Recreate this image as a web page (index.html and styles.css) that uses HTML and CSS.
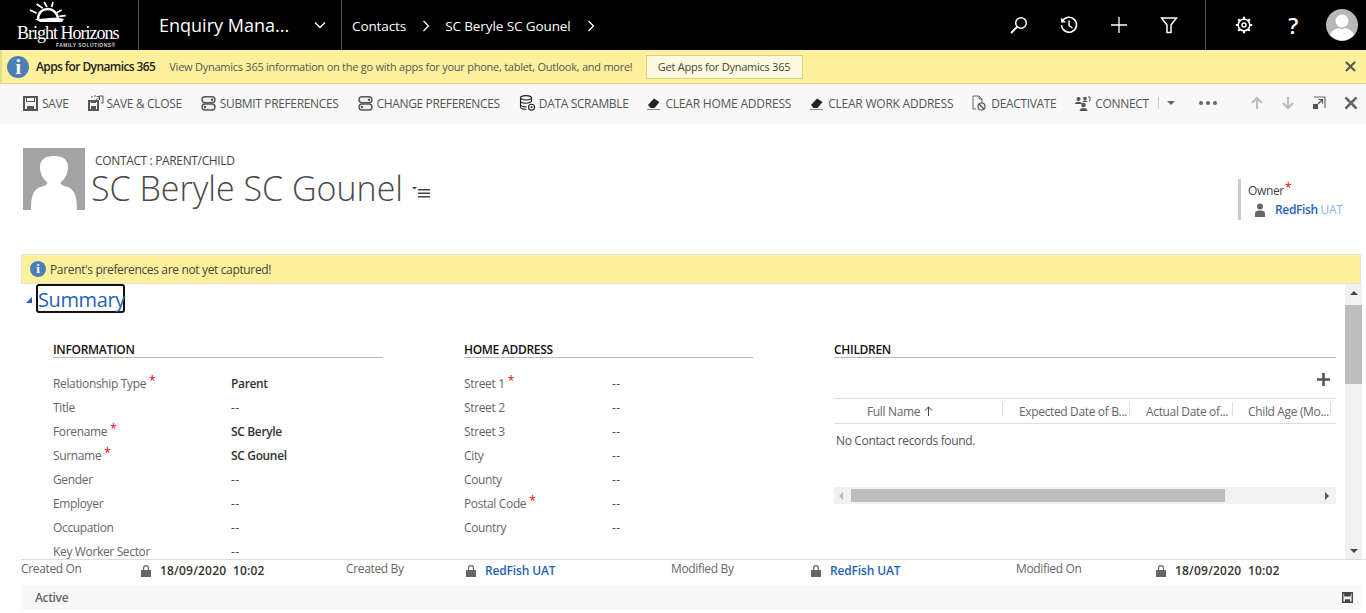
FILE: index.html
```html
<!DOCTYPE html>
<html lang="en">
<head>
    <meta charset="UTF-8">
    <meta name="viewport" content="width=device-width, initial-scale=1.0">
    <title>SC Beryle SC Gounel</title>
    <link rel="stylesheet" href="styles.css">
</head>
<body>
    <header class="topbar">
        <div class="logo">
            <svg class="logo-sun" width="44" height="23" viewBox="0 0 44 23">
                <path d="M10 19C10 11 15 8 20 8c5 0 9 4 10 9" fill="none" stroke="#fff" stroke-width="2.500"/>
                <path d="M7 18c8 1 15-3 29 0l-2 3H12z" fill="#fff"/>
                <path d="M8.700 3l6 4.300M2 9l6.700 3.300M25 1l-1.300 5M16 1l3 5M33.700 9l-5 2.700M37.700 14.700l-6.400.6" stroke="#fff" stroke-width="1.800"/>
            </svg>
            <div class="logo-name">Bright Horizons</div>
            <div class="logo-sub">FAMILY SOLUTIONS®</div>
        </div>
        <div class="app-name">
            <span>Enquiry Mana...</span>
            <svg width="12" height="8" viewBox="0 0 12 8"><path d="M1 1.500l5 5 5-5" fill="none" stroke="#fff" stroke-width="1.400"/></svg>
        </div>
        <nav class="crumbs">
            <span>Contacts</span>
            <svg class="crumb-arrow" width="8" height="12" viewBox="0 0 8 12"><path d="M1.500 1l5 5-5 5" fill="none" stroke="#fff" stroke-width="1.300"/></svg>
            <span>SC Beryle SC Gounel</span>
            <svg class="crumb-arrow" width="8" height="12" viewBox="0 0 8 12"><path d="M1.500 1l5 5-5 5" fill="none" stroke="#fff" stroke-width="1.300"/></svg>
        </nav>
        <div class="top-icons">
            <svg width="18" height="18" viewBox="0 0 18 18"><circle cx="11" cy="7" r="5.300" fill="none" stroke="#fff" stroke-width="1.500"/><path d="M7 11l-6 6" stroke="#fff" stroke-width="1.800"/></svg>
            <svg width="18" height="18" viewBox="0 0 18 18"><path d="M2.500 5A7.500 7.500 0 1 1 1.500 9" fill="none" stroke="#fff" stroke-width="1.600"/><path d="M1 1.500v5h5z" fill="#fff"/><path d="M9 4.500V9.500l3.500 2.500" fill="none" stroke="#fff" stroke-width="1.500"/></svg>
            <svg width="18" height="18" viewBox="0 0 18 18"><path d="M9 1v16M1 9h16" stroke="#fff" stroke-width="1.300"/></svg>
            <svg width="18" height="18" viewBox="0 0 18 18"><path d="M1.500 2h15l-5.500 7v7.500H7V9z" fill="none" stroke="#fff" stroke-width="1.500"/></svg>
        </div>
        <div class="top-icons top-icons-right">
            <svg width="18" height="18" viewBox="0 0 18 18"><circle cx="9" cy="9" r="2" fill="none" stroke="#fff" stroke-width="1.500"/><circle cx="9" cy="9" r="5.800" fill="none" stroke="#fff" stroke-width="1.500"/><path d="M9 .8v2.400M9 14.800v2.400M.8 9h2.400M14.800 9h2.400M3.200 3.200l1.700 1.700M13.100 13.100l1.700 1.700M3.200 14.800l1.700-1.700M13.100 4.900l1.700-1.700" stroke="#fff" stroke-width="2.200"/></svg>
            <span class="help">?</span>
            <svg class="avatar" width="32" height="32" viewBox="0 0 32 32"><circle cx="16" cy="16" r="16" fill="#b8b8b8"/><circle cx="16" cy="12" r="6.500" fill="#fff"/><path d="M4 26c2-6 7-6 9-7 2 1.500 4 1.500 6 0 2 1 7 1 9 7a16 16 0 0 1-24 0z" fill="#fff"/></svg>
        </div>
    </header>

    <div class="notify-bar">
        <span class="info-icon info-icon-big">i</span>
        <b class="notify-title">Apps for Dynamics 365</b>
        <span class="notify-text">View Dynamics 365 information on the go with apps for your phone, tablet, Outlook, and more!</span>
        <button class="notify-btn">Get Apps for Dynamics 365</button>
        <svg class="notify-close" width="11" height="11" viewBox="0 0 12 12"><path d="M1 1l10 10M11 1L1 11" stroke="#555" stroke-width="2.200"/></svg>
    </div>

    <div class="command-bar">
        <div class="cmd">
            <svg width="15" height="15" viewBox="0 0 15 15"><path d="M1 1h13v13H1z" fill="none" stroke="#555" stroke-width="2"/><path d="M3 1h9v5H3zM4 10h7v4H4z" fill="#555"/><path d="M4 2h7v3H4z" fill="#f8f8f8"/></svg>
            <span>SAVE</span>
        </div>
        <div class="cmd cmd-tight">
            <svg width="16" height="16" viewBox="0 0 16 16"><path d="M1 6h9v9H1z" fill="none" stroke="#555" stroke-width="2"/><path d="M3 11h5v4H3zM3 5h5v3H3z" fill="#555"/><path d="M4 3V1M6 1h2M11 1h4v7h-2" fill="none" stroke="#555"/><path d="M7 6l4-3.500M8.500 1.500H11.500V5" fill="none" stroke="#555"/></svg>
            <span>SAVE &amp; CLOSE</span>
        </div>
        <div class="cmd">
            <svg width="15" height="15" viewBox="0 0 15 15"><rect x="1" y=".8" width="13" height="6" rx="3" fill="#eee" stroke="#555" stroke-width="1.400"/><rect x="1" y="8" width="13" height="6" rx="3" fill="#eee" stroke="#555" stroke-width="1.400"/><circle cx="11" cy="3.800" r="1.200" fill="#555"/><circle cx="4" cy="11" r="1.200" fill="#555"/></svg>
            <span>SUBMIT PREFERENCES</span>
        </div>
        <div class="cmd">
            <svg width="15" height="15" viewBox="0 0 15 15"><rect x="1" y=".8" width="13" height="6" rx="3" fill="#eee" stroke="#555" stroke-width="1.400"/><rect x="1" y="8" width="13" height="6" rx="3" fill="#eee" stroke="#555" stroke-width="1.400"/><circle cx="11" cy="3.800" r="1.200" fill="#555"/><circle cx="4" cy="11" r="1.200" fill="#555"/></svg>
            <span>CHANGE PREFERENCES</span>
        </div>
        <div class="cmd">
            <svg width="16" height="16" viewBox="0 0 16 16"><ellipse cx="7" cy="2.800" rx="5.500" ry="2.200" fill="none" stroke="#222" stroke-width="1.100"/><path d="M1.500 3v9c0 1.500 2.500 2.300 6 2.200M12.500 3v4M1.500 6.500c1 2 8 2.500 11 0M1.500 10c1 1.500 4 2 6 1.800" fill="none" stroke="#222" stroke-width="1.100"/><circle cx="12.500" cy="12.300" r="3" fill="none" stroke="#222" stroke-width="1.100"/><circle cx="12.500" cy="12.300" r="1" fill="#222"/></svg>
            <span>DATA SCRAMBLE</span>
        </div>
        <div class="cmd cmd-wide">
            <svg width="14" height="13" viewBox="0 0 14 13"><path d="M1 8l6-6.500 5.500 3.500-5 6H3.500z" fill="#222"/><path d="M0 12h13v1H0z" fill="#888"/></svg>
            <span>CLEAR HOME ADDRESS</span>
        </div>
        <div class="cmd cmd-wide">
            <svg width="14" height="13" viewBox="0 0 14 13"><path d="M1 8l6-6.500 5.500 3.500-5 6H3.500z" fill="#222"/><path d="M0 12h13v1H0z" fill="#888"/></svg>
            <span>CLEAR WORK ADDRESS</span>
        </div>
        <div class="cmd">
            <svg width="15" height="16" viewBox="0 0 15 16"><path d="M4 14H1V1h6l3 3v4M7 1v3h3" fill="none" stroke="#666"/><circle cx="9.500" cy="11.500" r="3.500" fill="none" stroke="#555" stroke-width="1.200"/><path d="M7 9l5 5" stroke="#555" stroke-width="1.200"/></svg>
            <span>DEACTIVATE</span>
        </div>
        <div class="cmd">
            <svg width="16" height="15" viewBox="0 0 16 15"><circle cx="3.500" cy="3" r="2" fill="#555"/><path d="M0 8c0-3 7-3 7 0z" fill="#555"/><circle cx="10" cy="2.500" r="1.800" fill="#555"/><path d="M7.500 6c0-2 5-2 5 0z" fill="#555"/><circle cx="8.500" cy="9" r="2.300" fill="#555"/><path d="M4.500 15c0-4 8-4 8 0z" fill="#555"/><path d="M13 1h2v4h-1" fill="none" stroke="#555"/></svg>
            <span>CONNECT</span>
        </div>
        <div class="cmd-sep"></div>
        <div class="cmd-caret"></div>
        <div class="cmd-dots"><i></i><i></i><i></i></div>
        <div class="cmd-nav">
            <svg width="14" height="14" viewBox="0 0 14 14"><path d="M7 13V2M2 7l5-5 5 5" fill="none" stroke="#bbb" stroke-width="2"/></svg>
            <svg width="14" height="14" viewBox="0 0 14 14"><path d="M7 1v11M2 7l5 5 5-5" fill="none" stroke="#bbb" stroke-width="2"/></svg>
            <svg width="14" height="14" viewBox="0 0 14 14"><path d="M2 1h11v11" fill="none" stroke="#666" stroke-width="1.200"/><path d="M1 8h5v5H1z" fill="#555"/><path d="M6 8l4-4M6.500 3.500h4v4" fill="none" stroke="#555" stroke-width="1.200"/></svg>
            <svg class="cmd-close" width="14" height="14" viewBox="0 0 14 14"><path d="M1.500 1.500l11 11M12.500 1.500l-11 11" stroke="#666" stroke-width="2.600"/></svg>
        </div>
    </div>

    <section class="record-head">
        <svg class="record-photo" width="62" height="62" viewBox="0 0 62 62"><path d="M0 0h62v62H0z" fill="#a3a3a3"/><path d="M8 62c0-16 3-22 13-24 3-1 4-3 3-4-5-4-7-10-7-15C17 11 23 8 31 8s14 3 14 11c0 5-2 11-7 15-1 1 0 3 3 4 10 2 13 8 13 24z" fill="#fff"/></svg>
        <div class="record-title">
            <div class="record-type">CONTACT : PARENT/CHILD</div>
            <h1>SC Beryle SC Gounel
                <svg class="title-menu" width="18" height="12" viewBox="0 0 18 12"><path d="M0 1h5L2.500 3.500zM6 3h12v1.600H6zM6 6.500h12v1.600H6zM6 10h12v1.600H6z" fill="#444"/></svg>
            </h1>
        </div>
        <div class="owner">
            <div class="owner-label">Owner<span class="req">*</span></div>
            <div class="owner-value">
                <svg width="12" height="14" viewBox="0 0 12 14"><circle cx="6" cy="3.500" r="3" fill="#666"/><path d="M1 14v-3c0-3 2-3.500 5-3.500s5 .5 5 3.500v3z" fill="#666"/></svg>
                <span>RedFish <span class="owner-fade">UAT</span></span>
            </div>
        </div>
    </section>

    <div class="form-notice">
        <span class="info-icon">i</span>
        <span>Parent's preferences are not yet captured!</span>
    </div>

    <div class="form-area">
        <div class="form-scroll">
            <div class="summary-head">
                <span class="summary-arrow"></span>
                <span class="summary-title">Summary</span>
            </div>
            <div class="columns">
                <div class="col col-info">
                    <h2>INFORMATION</h2>
                    <div class="row"><label>Relationship Type<span class="req">*</span></label><b>Parent</b></div>
                    <div class="row"><label>Title</label><span>--</span></div>
                    <div class="row"><label>Forename<span class="req">*</span></label><b>SC Beryle</b></div>
                    <div class="row"><label>Surname<span class="req">*</span></label><b>SC Gounel</b></div>
                    <div class="row"><label>Gender</label><span>--</span></div>
                    <div class="row"><label>Employer</label><span>--</span></div>
                    <div class="row"><label>Occupation</label><span>--</span></div>
                    <div class="row"><label>Key Worker Sector</label><span>--</span></div>
                </div>
                <div class="col col-home">
                    <h2>HOME ADDRESS</h2>
                    <div class="row"><label>Street 1<span class="req">*</span></label><span>--</span></div>
                    <div class="row"><label>Street 2</label><span>--</span></div>
                    <div class="row"><label>Street 3</label><span>--</span></div>
                    <div class="row"><label>City</label><span>--</span></div>
                    <div class="row"><label>County</label><span>--</span></div>
                    <div class="row"><label>Postal Code<span class="req">*</span></label><span>--</span></div>
                    <div class="row"><label>Country</label><span>--</span></div>
                </div>
                <div class="col col-children">
                    <h2>CHILDREN</h2>
                    <div class="grid-tools">
                        <svg width="13" height="13" viewBox="0 0 13 13"><path d="M6.500 0v13M0 6.500h13" stroke="#555" stroke-width="2.600"/></svg>
                    </div>
                    <div class="grid-head">
                        <div class="gh gh-name">Full Name
                            <svg width="9" height="10" viewBox="0 0 9 10"><path d="M4.500 10V1M.8 4.500L4.500 1l3.700 3.500" fill="none" stroke="#444"/></svg>
                        </div>
                        <div class="gh gh-exp">Expected Date of B...</div>
                        <div class="gh gh-act">Actual Date of...</div>
                        <div class="gh gh-age">Child Age (Mo...</div>
                    </div>
                    <div class="grid-empty">No Contact records found.</div>
                    <div class="hscroll">
                        <span class="arrow-left"></span>
                        <div class="hscroll-track"><div class="hscroll-thumb"></div></div>
                        <span class="arrow-right"></span>
                    </div>
                </div>
            </div>
        </div>
        <div class="vscroll">
            <span class="arrow-up"></span>
            <div class="vscroll-track"><div class="vscroll-thumb"></div></div>
            <span class="arrow-down"></span>
        </div>
    </div>

    <footer class="audit">
        <div class="audit-item"><label>Created On</label><svg class="lock" width="10" height="12" viewBox="0 0 10 12"><path d="M0 5h10v7H0zM2 5V3a3 3 0 0 1 6 0v2H6.800V3a1.800 1.800 0 0 0-3.600 0v2z" fill="#666"/></svg><b class="stamp">18/09/2020&nbsp;&nbsp;10:02</b></div>
        <div class="audit-item"><label>Created By</label><svg class="lock" width="10" height="12" viewBox="0 0 10 12"><path d="M0 5h10v7H0zM2 5V3a3 3 0 0 1 6 0v2H6.800V3a1.800 1.800 0 0 0-3.600 0v2z" fill="#666"/></svg><b class="link">RedFish UAT</b></div>
        <div class="audit-item audit-long"><label>Modified By</label><svg class="lock" width="10" height="12" viewBox="0 0 10 12"><path d="M0 5h10v7H0zM2 5V3a3 3 0 0 1 6 0v2H6.800V3a1.800 1.800 0 0 0-3.600 0v2z" fill="#666"/></svg><b class="link">RedFish UAT</b></div>
        <div class="audit-item audit-long"><label>Modified On</label><svg class="lock" width="10" height="12" viewBox="0 0 10 12"><path d="M0 5h10v7H0zM2 5V3a3 3 0 0 1 6 0v2H6.800V3a1.800 1.800 0 0 0-3.600 0v2z" fill="#666"/></svg><b class="stamp">18/09/2020&nbsp;&nbsp;10:02</b></div>
    </footer>

    <div class="status-bar">
        <b>Active</b>
        <svg width="11" height="11" viewBox="0 0 15 15"><path d="M1 1h13v13H1z" fill="none" stroke="#444" stroke-width="2"/><path d="M3 1h9v5H3zM4 10h7v4H4z" fill="#444"/></svg>
    </div>
</body>
</html>
```

FILE: styles.css
```css
html, body {
    margin: 0;
    height: 613px;
    overflow: hidden;
}
body {
    font-family: "Open Sans", "Noto Sans", sans-serif;
    font-size: 12px;
    letter-spacing: -0.35px;
    color: #444;
    background-color: #fff;
}
svg {
    display: block;
    flex: none;
}
.req {
    color: #e00;
    margin-left: 3px;
    position: relative;
    top: -3px;
}

/* top bar */
.topbar {
    display: flex;
    align-items: stretch;
    height: 50px;
    background-color: #000;
    color: #fff;
}
.logo {
    width: 139px;
    box-sizing: border-box;
    padding-left: 17px;
    border-right: 1px solid #555;
    display: flex;
    flex-direction: column;
    align-items: flex-start;
    font-family: "Liberation Serif", serif;
    color: #fff;
}
.logo-sun {
    margin: 1px 0 0 11px;
}
.logo-name {
    font-size: 18px;
    line-height: 18px;
    letter-spacing: -1px;
}
.logo-sub {
    font-family: "Liberation Sans", sans-serif;
    font-size: 5px;
    font-weight: bold;
    line-height: 7px;
    letter-spacing: 0.45px;
    margin-left: 39px;
    color: #ccc;
}
.app-name {
    width: 203px;
    box-sizing: border-box;
    padding: 0 15px 0 20px;
    border-right: 1px solid #555;
    display: flex;
    align-items: center;
    justify-content: space-between;
    font-size: 18px;
    letter-spacing: 0;
}
.crumbs {
    display: flex;
    align-items: center;
    padding: 1px 0 0 10px;
    font-size: 13.500px;
    letter-spacing: -0.1px;
}
.crumb-arrow {
    margin: 0 15px 0 16px;
}
.top-icons {
    margin-left: auto;
    display: flex;
    align-items: center;
    gap: 32px;
    padding-right: 27px;
}
.top-icons-right {
    margin-left: 0;
    border-left: 1px solid #555;
    padding: 0 8px 0 29px;
    gap: 33px;
}
.help {
    font-size: 22px;
    font-weight: 600;
    width: 14px;
    text-align: center;
}
.avatar {
    margin-left: -7px;
}

/* notification */
.notify-bar {
    display: flex;
    align-items: center;
    height: 33px;
    background-color: #fff19c;
    border-left: 2px solid #e4dc8e;
    border-bottom: 1px solid #e0d98a;
    padding-left: 5px;
    font-size: 11px;
}
.info-icon {
    width: 16px;
    height: 16px;
    border-radius: 50%;
    background-color: #4b7fb8;
    color: #fff;
    font-family: "Liberation Serif", serif;
    font-weight: bold;
    font-size: 13px;
    line-height: 16px;
    text-align: center;
    flex: none;
}
.info-icon-big {
    width: 22px;
    height: 22px;
    line-height: 22px;
    font-size: 20px;
}
.notify-title {
    margin-left: 7px;
    font-weight: 600;
    color: #222;
    font-size: 12px;
    letter-spacing: -0.6px;
}
.notify-text {
    margin-left: 14px;
    color: #555;
    letter-spacing: -0.25px;
}
.notify-btn {
    margin-left: 13px;
    height: 24px;
    width: 157px;
    padding: 0;
    background-color: #fffbe0;
    border: 1px solid #d8d184;
    font-family: inherit;
    font-size: 11px;
    letter-spacing: -0.25px;
    color: #444;
}
.notify-close {
    margin-left: auto;
    margin-right: 10px;
}

/* command bar */
.command-bar {
    display: flex;
    align-items: center;
    height: 40px;
    box-sizing: border-box;
    background-color: #f8f8f8;
    padding: 0 0 2px 23px;
    gap: 19px;
    color: #555;
}
.cmd {
    display: flex;
    align-items: center;
    gap: 4px;
    white-space: nowrap;
}
.cmd-tight {
    gap: 3px;
}
.cmd-wide span {
    letter-spacing: -0.22px;
}
.cmd-sep {
    width: 1px;
    height: 12px;
    background-color: #ccc;
    margin-left: -10px;
}
.cmd-caret {
    width: 0;
    height: 0;
    border-left: 4px solid transparent;
    border-right: 4px solid transparent;
    border-top: 4px solid #666;
    margin-left: -11px;
}
.cmd-dots {
    display: flex;
    gap: 3px;
    margin-left: 5px;
}
.cmd-dots i {
    width: 4px;
    height: 4px;
    border-radius: 50%;
    background-color: #666;
}
.cmd-nav {
    margin-left: auto;
    display: flex;
    align-items: center;
    gap: 17px;
    padding-right: 8px;
}
.cmd-close {
    margin-left: 1px;
}

/* record header */
.record-head {
    display: flex;
    height: 130px;
    box-sizing: border-box;
    padding: 24px 25px 0 23px;
}
.record-type {
    margin: 6px 0 0 4px;
    font-size: 12px;
    line-height: 14px;
    color: #444;
}
.record-title h1 {
    margin: -1px 0 0;
    font-weight: 300;
    font-size: 34px;
    line-height: 42px;
    letter-spacing: 0;
    color: #4a4a4a;
    display: flex;
    align-items: center;
    white-space: nowrap;
}
.record-photo {
    margin-right: 6px;
}
.title-menu {
    margin: 8px 0 0 9px;
}
.owner {
    margin-left: auto;
    margin-top: 31px;
    width: 103px;
    height: 41px;
    box-sizing: border-box;
    border-left: 3px solid #ccc;
    padding-left: 7px;
}
.owner-label {
    font-size: 12px;
    line-height: 18px;
    margin-top: 3px;
}
.owner-label .req {
    margin-left: 1px;
}
.owner-value {
    display: flex;
    align-items: center;
    gap: 9px;
    margin: 1px 0 0 6px;
    color: #1f62b5;
    font-weight: 600;
    white-space: nowrap;
}
.owner-fade {
    font-weight: 400;
    opacity: 0.5;
}

/* form notice */
.form-notice {
    display: flex;
    align-items: center;
    gap: 4px;
    height: 30px;
    box-sizing: border-box;
    margin: 0 5px 0 21px;
    padding-left: 8px;
    background-color: #fff19c;
    border: 1px solid #e2e2e2;
    color: #444;
}

/* form */
.form-area {
    display: flex;
    height: 275px;
    overflow: hidden;
}
.form-scroll {
    flex: 1;
    overflow: hidden;
}
.summary-head {
    display: flex;
    height: 29px;
    margin-left: 26px;
}
.summary-arrow {
    width: 0;
    height: 0;
    border-left: 6px solid transparent;
    border-bottom: 6px solid #1f62b5;
    margin: 13px 4px 0 0;
}
.summary-title {
    font-size: 20px;
    line-height: 27px;
    letter-spacing: -0.4px;
    color: #1f62b5;
    width: 89px;
    height: 29px;
    box-sizing: border-box;
    border: 2px solid #111;
    border-radius: 3px;
    white-space: nowrap;
}
.columns {
    display: flex;
    padding: 30px 0 0 53px;
}
.col h2 {
    margin: 0 0 18px;
    height: 14px;
    font-size: 12px;
    line-height: 14px;
    font-weight: 600;
    letter-spacing: -0.3px;
    color: #111;
    border-bottom: 1px solid #bbb;
}
.col-info {
    width: 330px;
    margin-right: 81px;
}
.col-home {
    width: 289px;
    margin-right: 81px;
}
.col-children {
    width: 502px;
}
.row {
    display: flex;
    height: 24px;
    line-height: 16px;
    white-space: nowrap;
}
.row label {
    width: 148px;
    color: #666;
}
.col-info .row label {
    width: 178px;
}
.row b {
    font-weight: 600;
    color: #333;
}
.row > span {
    letter-spacing: 0.5px;
}
.grid-tools {
    display: flex;
    justify-content: flex-end;
    height: 25px;
    padding-right: 6px;
    margin-top: -3px;
}
.grid-head {
    display: flex;
    align-items: center;
    height: 24px;
    border-top: 1px solid #ddd;
    border-bottom: 1px solid #ddd;
    color: #666;
    white-space: nowrap;
}
.gh {
    height: 100%;
    display: flex;
    align-items: center;
    box-sizing: border-box;
    position: relative;
}
.gh::after {
    content: "";
    position: absolute;
    right: 0;
    top: 3px;
    height: 14px;
    width: 1px;
    background-color: #ddd;
}
.gh-name {
    width: 169px;
    padding-left: 33px;
    gap: 4px;
}
.gh-exp {
    width: 127px;
    padding-left: 16px;
}
.gh-act {
    width: 103px;
    padding-left: 16px;
}
.gh-age {
    width: 98px;
    padding-left: 15px;
}
.grid-empty {
    padding: 9px 0 0 2px;
    height: 54px;
    line-height: 16px;
    color: #555;
}
.hscroll {
    display: flex;
    align-items: center;
    height: 17px;
    background-color: #f1f1f1;
}
.hscroll-track {
    flex: 1;
    margin: 0 6px 0 8px;
}
.hscroll-thumb {
    width: 374px;
    height: 13px;
    background-color: #bdbdbd;
}
.arrow-left {
    width: 0;
    height: 0;
    margin-left: 5px;
    border-top: 4px solid transparent;
    border-bottom: 4px solid transparent;
    border-right: 4px solid #bbb;
}
.arrow-right {
    width: 0;
    height: 0;
    margin-right: 7px;
    border-top: 4px solid transparent;
    border-bottom: 4px solid transparent;
    border-left: 4px solid #555;
}
.vscroll {
    width: 17px;
    margin-right: 4px;
    background-color: #f1f1f1;
    display: flex;
    flex-direction: column;
    align-items: center;
}
.vscroll-track {
    flex: 1;
    width: 100%;
    margin-top: 10px;
}
.vscroll-thumb {
    height: 79px;
    width: 100%;
    background-color: #bdbdbd;
}
.arrow-up {
    width: 0;
    height: 0;
    margin-top: 7px;
    border-left: 4px solid transparent;
    border-right: 4px solid transparent;
    border-bottom: 4px solid #444;
}
.arrow-down {
    width: 0;
    height: 0;
    margin-bottom: 6px;
    border-left: 4px solid transparent;
    border-right: 4px solid transparent;
    border-top: 4px solid #444;
}

/* footer */
.audit {
    display: flex;
    height: 26px;
    box-sizing: border-box;
    margin-left: 21px;
    border-top: 1px solid #ddd;
    padding-top: 1px;
}
.audit-item {
    display: flex;
    width: 325px;
    white-space: nowrap;
}
.audit-item label {
    width: 120px;
    color: #666;
    line-height: 16px;
}
.audit-long {
    width: 345px;
}
.audit-long label {
    width: 140px;
}
.lock {
    margin: 4px 9px 0 0;
}
.audit-item b {
    font-weight: 600;
    color: #333;
    line-height: 20px;
}
.audit-item b.link {
    color: #1f62b5;
    letter-spacing: -0.15px;
}
.audit-item b.stamp {
    letter-spacing: 0.2px;
}
.status-bar {
    display: flex;
    align-items: center;
    justify-content: space-between;
    height: 25px;
    margin: 0 5px 0 21px;
    padding: 0 8px 0 14px;
    background-color: #f8f8f8;
}
.status-bar b {
    font-weight: 600;
    color: #666;
}
```
